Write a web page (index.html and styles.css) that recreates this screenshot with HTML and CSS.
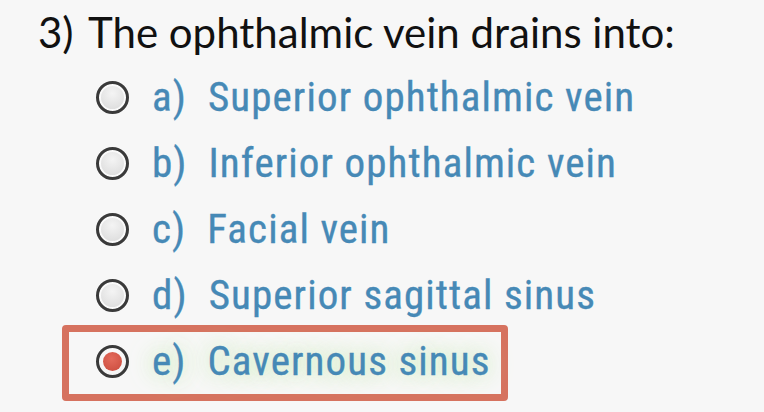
FILE: index.html
```html
<!DOCTYPE html>
<html>
<head>
<meta charset="utf-8">
<link rel="stylesheet" href="styles.css">
</head>
<body>
<div class="quiz">
  <div class="question"><span class="qnum">3)</span>The ophthalmic vein drains into:</div>
  <ul class="options">
    <li class="option"><span class="radio"></span><span class="label">a)&nbsp; Superior ophthalmic vein</span></li>
    <li class="option"><span class="radio"></span><span class="label">b)&nbsp; Inferior ophthalmic vein</span></li>
    <li class="option"><span class="radio"></span><span class="label">c)&nbsp; Facial vein</span></li>
    <li class="option"><span class="radio"></span><span class="label">d)&nbsp; Superior sagittal sinus</span></li>
    <li class="option selected"><span class="radio checked"></span><span class="label glow">e)&nbsp; Cavernous sinus</span></li>
  </ul>
</div>
</body>
</html>
```
FILE: styles.css
```css
html, body {
  margin: 0;
  padding: 0;
  background: #f7f7f7;
  width: 764px;
  height: 412px;
  overflow: hidden;
}
.quiz {
  padding-top: 7px;
}
.question {
  font-family: Lato, "Open Sans", sans-serif;
  font-size: 42px;
  line-height: 50px;
  color: #111;
  padding-left: 38px;
  height: 57px;
  display: flex;
}
.qnum {
  width: 50px;
  flex: none;
}
.options {
  list-style: none;
  margin: 0;
  padding: 0 0 0 96px;
  display: flex;
  flex-direction: column;
}
.option {
  height: 66px;
  display: flex;
  align-items: center;
  gap: 23px;
}
.radio {
  width: 33px;
  height: 33px;
  box-sizing: border-box;
  border-radius: 50%;
  border: 3px solid #3a3a3a;
  background: radial-gradient(circle at 50% 35%, #f4f4f4 0%, #e2e2e2 60%, #d6d6d6 100%);
  box-shadow: inset 0 0 0 2px #fafafa;
  flex: none;
  position: relative;
}
.radio.checked {
  background: radial-gradient(circle at 50% 40%, #ffffff 0%, #f0f0f0 100%);
  box-shadow: none;
}
.radio.checked::after {
  content: "";
  position: absolute;
  left: 4px;
  top: 4px;
  width: 19px;
  height: 19px;
  border-radius: 50%;
  background: radial-gradient(circle at 45% 35%, #e46b5c 0%, #c94a3c 100%);
}
.label {
  font-family: "Roboto Condensed", Roboto, sans-serif;
  font-size: 41px;
  letter-spacing: 1.1px;
  -webkit-text-stroke: 0.35px #4689b6;
  color: #4689b6;
  white-space: nowrap;
}
.option.selected {
  margin-top: -3px;
  margin-left: -34px;
  height: 76px;
  width: 446px;
  box-sizing: border-box;
  border: 7px solid #d6725f;
  border-radius: 4px;
  padding-left: 27px;
  padding-bottom: 4px;
}
.glow {
  text-shadow: 0 0 18px rgba(205, 240, 185, 0.9), 0 0 28px rgba(215, 242, 200, 0.8);
}
```
